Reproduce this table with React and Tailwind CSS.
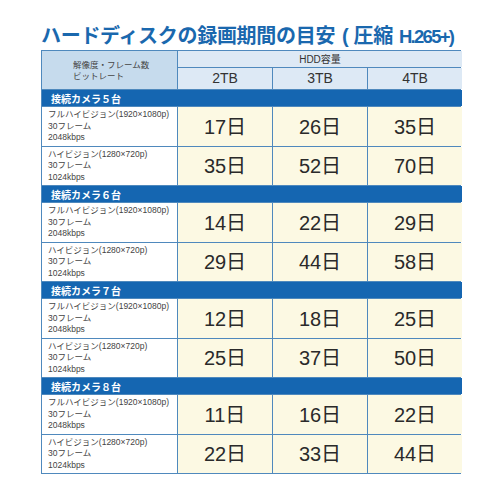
import React from "react";

const sections = [
  { n: "５", a: ["17日", "26日", "35日"], b: ["35日", "52日", "70日"] },
  { n: "６", a: ["14日", "22日", "29日"], b: ["29日", "44日", "58日"] },
  { n: "７", a: ["12日", "18日", "25日"], b: ["25日", "37日", "50日"] },
  { n: "８", a: ["11日", "16日", "22日"], b: ["22日", "33日", "44日"] },
];

function DataRow({ lines, vals, h }) {
  return (
    <>
      <div className={`${h} bg-white pl-[6px] flex flex-col justify-center text-[8.5px] leading-[11.5px] text-[#444] font-[Liberation_Sans,Noto_Sans_CJK_JP,sans-serif]`}>
        {lines.map((l) => (
          <div key={l}>{l}</div>
        ))}
      </div>
      {vals.map((v, i) => (
        <div key={i} className={`${h} bg-[#fcf9e3] flex items-center justify-center text-[20px] text-[#2a2a2a] font-[Liberation_Sans,Noto_Sans_CJK_JP,sans-serif]`}>
          {v}
        </div>
      ))}
    </>
  );
}

export default function App() {
  return (
    <div className="w-[500px] h-[500px] bg-white pt-[22px]">
      <div className="h-[26px] pl-[41px] flex items-baseline text-[20px] leading-[26px] font-bold text-[#1a68ae] whitespace-nowrap font-[Noto_Sans_CJK_JP,sans-serif] tracking-[-0.3px]">
        <span>ハードディスクの録画期間の目安</span>
        <span className="font-[Liberation_Sans,sans-serif] ml-[7px] mr-[5px]">(</span>
        <span>圧縮</span>
        <span className="font-[Liberation_Sans,sans-serif] text-[18.5px] tracking-[-1.7px] ml-[6px]">H.265+)</span>
      </div>
      <div className="ml-[41px] mt-[2px] w-[420px] bg-[#4f89bd] p-px grid grid-cols-[135px_94px_94px_94px] gap-px">
        <div className="row-span-2 bg-[#c6dbed] flex flex-col justify-center pl-[31px] text-[8.5px] leading-[11px] text-[#444] font-[Noto_Sans_CJK_JP,sans-serif]">
          <div>解像度・フレーム数</div>
          <div>ビットレート</div>
        </div>
        <div className="col-span-3 h-[16px] bg-[#dde9f5] flex items-center justify-center text-[10px] text-[#333] font-[Liberation_Sans,Noto_Sans_CJK_JP,sans-serif]">
          HDD容量
        </div>
        {["2TB", "3TB", "4TB"].map((t) => (
          <div key={t} className="h-[21px] bg-[#dde9f5] flex items-center justify-center text-[14px] text-[#333] font-[Liberation_Sans,sans-serif]">
            {t}
          </div>
        ))}
        {sections.map((s) => (
          <React.Fragment key={s.n}>
            <div className="col-span-4 h-[16px] bg-[#1566b1] flex items-center pl-[9px] text-[10px] font-bold text-white font-[Noto_Sans_CJK_JP,sans-serif]">
              接続カメラ{s.n}台
            </div>
            <DataRow h="h-[39px]" lines={["フルハイビジョン(1920×1080p)", "30フレーム", "2048kbps"]} vals={s.a} />
            <DataRow h="h-[38px]" lines={["ハイビジョン(1280×720p)", "30フレーム", "1024kbps"]} vals={s.b} />
          </React.Fragment>
        ))}
      </div>
    </div>
  );
}
